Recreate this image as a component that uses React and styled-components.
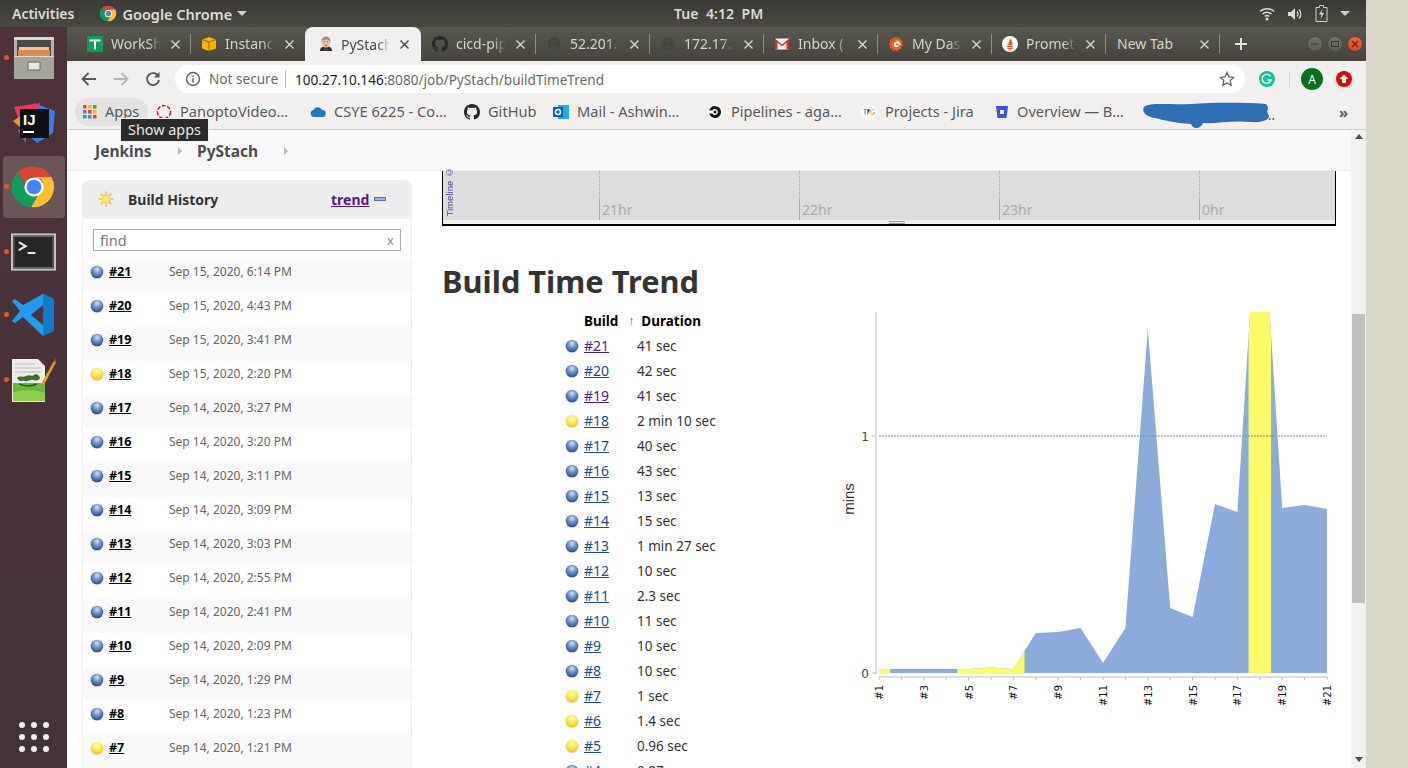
import React from "react"
import styled, { createGlobalStyle } from "styled-components"

const FONT = `"Noto Sans", "Open Sans", "Liberation Sans", sans-serif`

const GlobalStyle = createGlobalStyle`
  *{
    margin:0;
    padding:0;
    box-sizing:border-box;
  }
  html, body{
    width:1408px;
    height:768px;
    overflow:hidden;
    background:#d9d8cb;
    font-family:${FONT};
  }
`

const Desktop = styled.div`
  width:1408px;
  height:768px;
  overflow:hidden;
  position:relative;
  background:#d9d8cb;
`
const Screen = styled.div`
  width:1366px;
  height:768px;
  display:flex;
  flex-direction:column;
`
const TopBar = styled.div`
  height:27px;
  flex:none;
  display:flex;
  align-items:center;
  background:linear-gradient(#3a3935, #494840);
  color:#dcdcd6;
  font-size:14px;
  font-weight:600;
  padding-left:12px;
  position:relative;
`
const AppMenu = styled.div`
  display:flex;
  align-items:center;
  gap:5px;
  margin-left:26px;
  font-size:14.5px;
`
const Caret = styled.span`
  width:0;
  height:0;
  border-left:5px solid transparent;
  border-right:5px solid transparent;
  border-top:5px solid #cfcfc9;
  margin-left:${p => p.$left || 0}px;
`
const Clock = styled.div`
  position:absolute;
  left:674px;
  word-spacing:4px;
  white-space:nowrap;
`
const StatusIcons = styled.div`
  margin-left:auto;
  display:flex;
  align-items:center;
  gap:12px;
  padding-right:16px;
`
const Body = styled.div`
  flex:1;
  min-height:0;
  display:flex;
`
const Dock = styled.div`
  width:67px;
  flex:none;
  background:linear-gradient(#4d3339, #42323a);
  display:flex;
  flex-direction:column;
  align-items:center;
  position:relative;
`
const DockItem = styled.div`
  width:62px;
  height:${p => p.$h || 64}px;
  flex:none;
  display:flex;
  align-items:center;
  justify-content:center;
  border-radius:4px;
  background:${p => p.$active ? "#6c5558" : "transparent"};
  position:relative;
  &::before{
    content:"";
    display:${p => p.$idle ? "none" : "block"};
    position:absolute;
    left:1px;
    top:50%;
    margin-top:-3px;
    width:5px;
    height:5px;
    border-radius:50%;
    background:#e95420;
  }
`
const ShowApps = styled.div`
  margin-top:auto;
  margin-bottom:16px;
  display:grid;
  grid-template-columns:repeat(3, 6px);
  gap:6px;
`
const Dot = styled.span`
  width:6px;
  height:6px;
  border-radius:50%;
  background:#eee;
`
const Chrome = styled.div`
  flex:1;
  min-width:0;
  display:flex;
  flex-direction:column;
  position:relative;
`
const TabStrip = styled.div`
  height:34px;
  flex:none;
  display:flex;
  padding-left:9px;
  background:linear-gradient(#595850, #46443c);
  position:relative;
`
const Tab = styled.div`
  width:${p => p.$active ? 116 : 114}px;
  flex:none;
  height:${p => p.$active ? "34px" : "32px"};
  display:flex;
  align-items:center;
  padding:${p => p.$active ? "0 3px 0 13px" : "0 1px 0 11px"};
  font-size:14px;
  color:${p => p.$active ? "#4a4a4a" : "#d4d3cd"};
  background:${p => p.$active ? "#f1f0ef" : "transparent"};
  border-radius:${p => p.$active ? "8px 8px 0 0" : "0"};
  margin-top:${p => p.$active ? "0" : "1px"};
  margin-left:${p => p.$active ? "1px" : "0"};
  position:relative;
  &::after{
    content:"";
    display:${p => p.$divider ? "block" : "none"};
    position:absolute;
    right:-1px;
    top:6px;
    height:20px;
    width:1px;
    background:#8f8e85;
  }
`
const TabIcon = styled.span`
  width:16px;
  height:16px;
  flex:none;
  display:flex;
  align-items:center;
  justify-content:center;
`
const TabTitle = styled.span`
  flex:1;
  min-width:0;
  margin-left:${p => p.$blank ? 1 : p.$active ? 7 : 8}px;
  margin-top:${p => p.$active ? 0 : -2}px;
  white-space:nowrap;
  overflow:hidden;
  -webkit-mask-image:${p => p.$blank ? "none" : "linear-gradient(to right, #000 75%, transparent 100%)"};
  mask-image:${p => p.$blank ? "none" : "linear-gradient(to right, #000 75%, transparent 100%)"};
`
const TabClose = styled.span`
  width:28px;
  flex:none;
  text-align:center;
  line-height:1;
`
const NewTab = styled.div`
  width:44px;
  display:flex;
  align-items:center;
  justify-content:center;
`
const WindowButtons = styled.div`
  position:absolute;
  right:3px;
  top:9px;
  display:flex;
  gap:4px;
`
const WinBtn = styled.span`
  width:16px;
  height:16px;
  border-radius:50%;
  display:flex;
  align-items:center;
  justify-content:center;
  background:${p => p.$close ? "linear-gradient(#f0693a, #d9481c)" : "linear-gradient(#75746c, #5c5b53)"};
  border:1px solid #4b4a42;
`
const Toolbar = styled.div`
  height:34px;
  flex:none;
  display:flex;
  align-items:center;
  padding-top:2px;
  background:#f1f0ef;
`
const NavIcons = styled.div`
  width:108px;
  flex:none;
  display:flex;
  align-items:center;
  gap:14px;
  padding-left:13px;
`
const Omnibox = styled.div`
  width:1070px;
  height:28px;
  flex:none;
  background:#fff;
  border-radius:14px;
  display:flex;
  align-items:center;
  padding:0 10px 0 10px;
  font-size:13.6px;
  color:#6a6a6a;
`
const Secure = styled.span`
  margin-left:8px;
  padding-right:8px;
  border-right:1px solid #bbb;
  line-height:18px;
  width:77px;
  white-space:nowrap;
`
const Url = styled.span`
  margin-left:9px;
  color:#6a6a6a;
  b{
    font-weight:400;
    color:#222;
  }
`
const StarWrap = styled.span`
  margin-left:auto;
  display:flex;
`
const ToolbarRight = styled.div`
  display:flex;
  align-items:center;
  padding-left:14px;
`
const Sep = styled.span`
  width:1px;
  height:16px;
  background:#d5d5d5;
  margin:0 11px 0 14px;
`
const Avatar = styled.span`
  width:22px;
  height:22px;
  border-radius:50%;
  background:#0b6f1e;
  color:#fff;
  font-size:12px;
  display:flex;
  align-items:center;
  justify-content:center;
  margin-right:13px;
`
const BookmarkBar = styled.div`
  height:35px;
  flex:none;
  display:flex;
  align-items:center;
  background:#f1f0ef;
  border-bottom:1px solid #cfcfcf;
  padding-left:8px;
  position:relative;
  font-size:14.6px;
  color:#5a5a5a;
`
const Bookmark = styled.div`
  width:${p => p.$w}px;
  height:28px;
  flex:none;
  display:flex;
  align-items:center;
  gap:8px;
  padding-left:8px;
  white-space:nowrap;
  border-radius:14px;
  background:${p => p.$hover ? "#e3e2e1" : "transparent"};
`
const BookmarkText = styled.span`
  margin-top:-2px;
`
const Scribble = styled.div`
  width:135px;
  flex:none;
  margin-left:8px;
  height:22px;
  display:flex;
  align-items:flex-start;
`
const MoreMarks = styled.span`
  position:absolute;
  left:1272px;
  top:9px;
  font-size:15px;
  font-weight:700;
  line-height:16px;
  color:#555;
`
const Tooltip = styled.div`
  position:absolute;
  left:53px;
  top:91px;
  width:89px;
  height:24px;
  background:#2b2b2b;
  border:1px solid #eee;
  color:#e8e8e8;
  font-size:14.4px;
  line-height:22px;
  text-align:center;
  z-index:5;
`
const Page = styled.div`
  flex:1;
  min-height:0;
  display:flex;
  background:#fff;
`
const PageContent = styled.div`
  flex:1;
  min-width:0;
  display:flex;
  flex-direction:column;
  overflow:hidden;
`
const Scrollbar = styled.div`
  width:15px;
  flex:none;
  background:#f1f1f1;
  display:flex;
  flex-direction:column;
  align-items:center;
  padding-top:4px;
`
const ArrowUp = styled.span`
  width:0;
  height:0;
  border-left:4px solid transparent;
  border-right:4px solid transparent;
  border-bottom:5px solid #505050;
`
const ArrowDown = styled.span`
  width:0;
  height:0;
  margin-top:154px;
  border-left:4px solid transparent;
  border-right:4px solid transparent;
  border-top:5px solid #505050;
`
const Thumb = styled.div`
  width:13px;
  height:289px;
  background:#c1c1c1;
  margin-top:175px;
`
const Breadcrumbs = styled.div`
  height:41px;
  flex:none;
  display:flex;
  align-items:center;
  padding:1px 0 0 28px;
  background:#f8f8f8;
  border-bottom:1px solid #e9e9e9;
  font-size:15.5px;
  font-weight:700;
  color:#4a4d52;
`
const Crumb = styled.span`
  width:${p => p.$w}px;
  flex:none;
`
const CrumbArrow = styled.span`
  width:0;
  height:0;
  border-top:4px solid transparent;
  border-bottom:4px solid transparent;
  border-left:4px solid #b8b8b8;
  margin-right:${p => p.$right}px;
`
const Columns = styled.div`
  flex:1;
  min-height:0;
  display:flex;
`
const Side = styled.div`
  width:330px;
  flex:none;
  margin:9px 0 0 15px;
  border:1px solid #eee;
  border-bottom:none;
  border-radius:6px 6px 0 0;
  overflow:hidden;
`
const SideHead = styled.div`
  height:38px;
  display:flex;
  align-items:center;
  background:#eee;
  padding:0 0 2px 15px;
  font-size:14px;
  font-weight:700;
  color:#333;
`
const SideTitle = styled.span`
  margin-left:14px;
  width:203px;
`
const TrendLink = styled.a`
  color:#551a8b;
  text-decoration:underline;
`
const MinusIcon = styled.span`
  width:12px;
  height:4px;
  margin-left:5px;
  background:#9db7e0;
  border:1px solid #4f76b5;
`
const FindWrap = styled.div`
  padding:10px 10px 8px;
`
const FindBox = styled.div`
  height:22px;
  border:1px solid #aaa;
  display:flex;
  align-items:center;
  justify-content:space-between;
  padding:0 6px;
  font-size:14.5px;
  color:#777;
`
const FindClear = styled.span`
  font-size:13px;
  color:#888;
`
const HistoryRow = styled.div`
  height:34px;
  display:flex;
  align-items:flex-start;
  padding:4px 0 0 7px;
  background:${p => p.$odd ? "#f9f9f9" : "#fff"};
`
const BallWrap = styled.span`
  width:15px;
  height:18px;
  flex:none;
  display:flex;
  align-items:center;
`
const HistoryLink = styled.a`
  width:60px;
  flex:none;
  margin-left:4px;
  font-size:12.5px;
  font-weight:700;
  line-height:18px;
  color:#000;
  text-decoration:underline;
`
const HistoryDate = styled.span`
  font-size:12px;
  line-height:18px;
  color:#666;
  white-space:nowrap;
`
const Main = styled.div`
  flex:1;
  min-width:0;
  padding:0 15px 0 30px;
`
const Timeline = styled.div`
  width:894px;
  height:55px;
  border:solid #000;
  border-width:0 1px 2px 1px;
  background:#f0f0f0;
`
const TimelineBand = styled.div`
  height:49px;
  background:#ddd;
  display:flex;
`
const TimelineCopy = styled.div`
  width:156px;
  flex:none;
  display:flex;
  align-items:flex-end;
  padding:0 0 3px 2px;
`
const TimelineText = styled.span`
  writing-mode:vertical-rl;
  transform:rotate(180deg);
  font-family:"Liberation Sans", sans-serif;
  font-size:9.6px;
  line-height:10px;
  color:#4a4a94;
  white-space:nowrap;
`
const Hour = styled.div`
  width:${p => p.$w}px;
  flex:none;
  display:flex;
  flex-direction:column;
`
const HourDots = styled.div`
  height:28px;
  border-left:1px dotted #aaa;
`
const HourMark = styled.div`
  flex:1;
  border-left:1px solid #aaa;
  padding-left:2px;
  font-size:14px;
  line-height:21px;
  color:#aaa;
`
const Grip = styled.div`
  width:16px;
  height:3px;
  margin:1px 0 0 446px;
  border:solid #999;
  border-width:1px 0;
`
const Title = styled.h1`
  font-size:30.8px;
  font-weight:700;
  line-height:40px;
  color:#333;
  margin:35px 0 0 0;
`
const TrendRow = styled.div`
  display:flex;
  align-items:flex-start;
`
const Table = styled.div`
  width:398px;
  flex:none;
  padding:7px 0 0 123px;
  font-size:13.5px;
  color:#333;
`
const HeadRow = styled.div`
  height:25px;
  display:flex;
  align-items:center;
  padding-left:19px;
  font-weight:700;
  color:#000;
`
const SortArrow = styled.span`
  width:13px;
  margin-left:${p => p.$left}px;
  color:#a33;
  font-weight:400;
  font-size:12px;
  text-align:left;
`
const BuildRow = styled.div`
  height:25px;
  display:flex;
  align-items:center;
`
const BallCell = styled.span`
  width:19px;
  flex:none;
  display:flex;
`
const BuildLink = styled.a`
  width:53px;
  flex:none;
  font-size:14px;
  color:${p => p.$visited ? "#551a8b" : "#204a87"};
  text-decoration:underline;
`
const ChartWrap = styled.div`
  width:500px;
  flex:none;
  margin-top:-1px;
`

function Ball({ color, size = 14 }) {
  const id = color === "yellow" ? "ballY" : "ballB"
  return (
    <svg width={size} height={size} viewBox="0 0 14 14">
      <circle cx="7" cy="7.5" r="6.5" fill="#ddd" />
      <circle cx="7" cy="7" r="6.3" fill={`url(#${id})`} />
    </svg>
  )
}

function BallDefs() {
  return (
    <svg width="0" height="0" style={{ position: "absolute" }}>
      <defs>
        <radialGradient id="ballB" cx="50%" cy="30%" r="75%">
          <stop offset="0%" stopColor="#d4e0f2" />
          <stop offset="40%" stopColor="#7596cc" />
          <stop offset="100%" stopColor="#213f88" />
        </radialGradient>
        <radialGradient id="ballY" cx="50%" cy="30%" r="75%">
          <stop offset="0%" stopColor="#fffbc0" />
          <stop offset="50%" stopColor="#fde94a" />
          <stop offset="100%" stopColor="#f6b60c" />
        </radialGradient>
      </defs>
    </svg>
  )
}

function ChromeLogo({ size = 17 }) {
  return (
    <svg width={size} height={size} viewBox="0 0 48 48">
      <path d="M24 2a22 22 0 0 1 19 11H24a11 11 0 0 0-10 6.5L6 8A22 22 0 0 1 24 2z" fill="#db4437" />
      <path d="M6 8l9.5 16.5A11 11 0 0 0 27 34.6L21 45.8A22 22 0 0 1 6 8z" fill="#0f9d58" />
      <path d="M43 13a22 22 0 0 1-22 32.8L31.5 28A11 11 0 0 0 32 15.5L24 13z" fill="#fbc02d" />
      <circle cx="24" cy="24" r="10.5" fill="#fff" />
      <circle cx="24" cy="24" r="8" fill="#4285f4" />
    </svg>
  )
}

function Globe() {
  return (
    <svg width="16" height="16" viewBox="0 0 16 16">
      <circle cx="8" cy="8" r="7" fill="#45443f" stroke="#4f4e49" />
      <path d="M3 5h10M3 11h10M8 1v14" stroke="#4f4e49" />
    </svg>
  )
}

const tabIcons = {
  sheet: (
    <svg width="16" height="16" viewBox="0 0 16 16">
      <rect width="16" height="16" rx="1" fill="#0f9d58" />
      <path d="M2.5 4.5h11M8 4.5v9" stroke="#fff" strokeWidth="2" />
    </svg>
  ),
  aws: (
    <svg width="16" height="16" viewBox="0 0 16 16">
      <path d="M1 3.5L8 1l7 2.5v9L8 15l-7-2.5z" fill="#f7b500" />
      <path d="M1 3.5L8 6l7-2.5M8 6v9" stroke="#7a5a00" strokeWidth=".8" fill="none" />
    </svg>
  ),
  jenkins: (
    <svg width="18" height="18" viewBox="0 0 18 18">
      <path d="M2 17c0-3 2-4.5 3.5-5h7c1.5.5 3.5 2 3.5 5z" fill="#2f2f33" />
      <ellipse cx="9" cy="7" rx="5" ry="6" fill="#e9c3a8" />
      <path d="M4 7C3.5 2 7 .5 9 .5S14.5 2 14 7c-1-2-2-3-5-3S5 5 4 7z" fill="#9a8f86" />
      <path d="M7 14l2 1 2-1v2H7z" fill="#c8302c" />
      <path d="M6.5 6.5H8M10 6.5h1.5M7.5 10c1 .6 2 .6 3 0" stroke="#5b3a2a" strokeWidth=".8" />
    </svg>
  ),
  github: (
    <svg width="16" height="16" viewBox="0 0 16 16">
      <path fill="#26262b" d="M8 0C3.58 0 0 3.58 0 8c0 3.54 2.29 6.53 5.47 7.59.4.07.55-.17.55-.38 0-.19-.01-.82-.01-1.49-2.01.37-2.53-.49-2.69-.94-.09-.23-.48-.94-.82-1.13-.28-.15-.68-.52-.01-.53.63-.01 1.08.58 1.23.82.72 1.21 1.87.87 2.33.66.07-.52.28-.87.51-1.07-1.78-.2-3.64-.89-3.64-3.95 0-.87.31-1.59.82-2.15-.08-.2-.36-1.02.08-2.12 0 0 .67-.21 2.2.82.64-.18 1.32-.27 2-.27s1.36.09 2 .27c1.53-1.04 2.2-.82 2.2-.82.44 1.1.16 1.92.08 2.12.51.56.82 1.27.82 2.15 0 3.07-1.87 3.75-3.65 3.95.29.25.54.73.54 1.48 0 1.07-.01 1.93-.01 2.2 0 .21.15.46.55.38A8.01 8.01 0 0 0 16 8c0-4.42-3.58-8-8-8z" />
    </svg>
  ),
  gmail: (
    <svg width="16" height="16" viewBox="0 0 16 16">
      <rect x="1" y="2.5" width="14" height="11" fill="#f5f5f5" />
      <path d="M1 13.5v-11l7 6 7-6v11h-2.5V6.5L8 10.5 3.5 6.5v7z" fill="#d32f2f" />
    </svg>
  ),
  grafana: (
    <svg width="16" height="16" viewBox="0 0 16 16">
      <circle cx="8" cy="8" r="6" fill="#f7941d" />
      <path d="M8 .5l1.5 2 2.500-.8.5 2.500 2.500.8-1 2.300 1.500 2-2.300 1.200.2 2.500-2.500.1L9 15.500l-2-1.500-2.200 1.200-.7-2.400-2.600-.3.5-2.500L.5 8l1.800-1.800L1.800 3.700l2.500-.4L5 1l2 .9z" fill="#e8541e" />
      <circle cx="8.5" cy="8.5" r="4" fill="#fff" />
      <path d="M12 8.5a3.5 3.5 0 1 1-3.5-3.5M8 8.5h2.5" stroke="#e8541e" strokeWidth="1.5" fill="none" />
    </svg>
  ),
  prometheus: (
    <svg width="16" height="16" viewBox="0 0 16 16">
      <circle cx="8" cy="8" r="8" fill="#fff" />
      <path d="M8 2c.5 2 2.5 3 2.5 5.500 0 1-.4 1.500-.6 2H5.800c-.3-.6-.5-1.200-.3-2.200.1.500.5 1 1 1C6.200 6 8.200 5 8 2z" fill="#e6522c" />
      <path d="M5 10h6v1.200H5zM5.500 12h5v1H5.500zM6.500 13.500h3v1h-3z" fill="#e6522c" />
    </svg>
  ),
}

const tabs = [
  { title: "WorkSh", icon: tabIcons.sheet, divider: true },
  { title: "Instanc", icon: tabIcons.aws },
  { title: "PyStach", icon: tabIcons.jenkins, active: true },
  { title: "cicd-pip", icon: tabIcons.github, divider: true },
  { title: "52.201.", icon: <Globe />, divider: true },
  { title: "172.17.", icon: <Globe />, divider: true },
  { title: "Inbox (", icon: tabIcons.gmail, divider: true },
  { title: "My Das", icon: tabIcons.grafana, divider: true },
  { title: "Promet", icon: tabIcons.prometheus, divider: true },
  { title: "New Tab", divider: true, blank: true },
]

const bookmarks = [
  {
    w: 154, label: "PanoptoVideo…",
    icon: <svg width="16" height="16" viewBox="0 0 16 16"><circle cx="8" cy="8" r="6.5" fill="none" stroke="#d8212a" strokeWidth="1.6" strokeDasharray="4 1.5" /></svg>,
  },
  {
    w: 154, label: "CSYE 6225 - Co…",
    icon: <svg width="16" height="16" viewBox="0 0 16 16"><path d="M4 13a3.5 3.5 0 0 1-.6-6.9A4.5 4.5 0 0 1 11.8 6 3.5 3.5 0 0 1 12.5 13z" fill="#1d78c8" /></svg>,
  },
  { w: 89, label: "GitHub", icon: tabIcons.github },
  {
    w: 154, label: "Mail - Ashwin…",
    icon: (
      <svg width="16" height="16" viewBox="0 0 16 16">
        <rect x="5" y="1" width="11" height="14" fill="#28a8ea" />
        <rect x="0" y="3" width="10" height="10" fill="#0f5fb5" />
        <circle cx="5" cy="8" r="2.5" fill="none" stroke="#fff" strokeWidth="1.5" />
      </svg>
    ),
  },
  {
    w: 154, label: "Pipelines - aga…",
    icon: (
      <svg width="16" height="16" viewBox="0 0 16 16">
        <circle cx="8" cy="8" r="8" fill="#fff" />
        <path d="M8 2a6 6 0 1 1-5.8 7.5h3.100A3 3 0 1 0 5.300 6.500H2.200A6 6 0 0 1 8 2z" fill="#161616" />
        <circle cx="8" cy="8" r="1.5" fill="#161616" />
      </svg>
    ),
  },
  {
    w: 134, label: "Projects - Jira",
    icon: (
      <svg width="16" height="16" viewBox="0 0 16 16">
        <circle cx="8" cy="8" r="8" fill="#fff" />
        <path d="M2.5 5.5h3M4 5.5v5" stroke="#4a90d9" />
        <path d="M6.5 10.5v-5H9M6.5 8h2" stroke="#e56fa0" />
        <path d="M13.5 6a2.5 2.5 0 1 0 0 4V8.500H12" stroke="#e89a3c" fill="none" />
      </svg>
    ),
  },
  {
    w: 146, label: "Overview — B…",
    icon: <svg width="14" height="16" viewBox="0 0 14 16"><path d="M1 2h12l-1.500 12h-9z" fill="#3d4ff0" /><rect x="5" y="6" width="4" height="4" fill="#fff" /></svg>,
  },
]

const history = [
  ["#21", "Sep 15, 2020, 6:14 PM", "blue"],
  ["#20", "Sep 15, 2020, 4:43 PM", "blue"],
  ["#19", "Sep 15, 2020, 3:41 PM", "blue"],
  ["#18", "Sep 15, 2020, 2:20 PM", "yellow"],
  ["#17", "Sep 14, 2020, 3:27 PM", "blue"],
  ["#16", "Sep 14, 2020, 3:20 PM", "blue"],
  ["#15", "Sep 14, 2020, 3:11 PM", "blue"],
  ["#14", "Sep 14, 2020, 3:09 PM", "blue"],
  ["#13", "Sep 14, 2020, 3:03 PM", "blue"],
  ["#12", "Sep 14, 2020, 2:55 PM", "blue"],
  ["#11", "Sep 14, 2020, 2:41 PM", "blue"],
  ["#10", "Sep 14, 2020, 2:09 PM", "blue"],
  ["#9", "Sep 14, 2020, 1:29 PM", "blue"],
  ["#8", "Sep 14, 2020, 1:23 PM", "blue"],
  ["#7", "Sep 14, 2020, 1:21 PM", "yellow"],
]

const durations = [
  ["#21", "41 sec", "blue", true],
  ["#20", "42 sec", "blue"],
  ["#19", "41 sec", "blue", true],
  ["#18", "2 min 10 sec", "yellow"],
  ["#17", "40 sec", "blue"],
  ["#16", "43 sec", "blue"],
  ["#15", "13 sec", "blue"],
  ["#14", "15 sec", "blue"],
  ["#13", "1 min 27 sec", "blue"],
  ["#12", "10 sec", "blue"],
  ["#11", "2.3 sec", "blue"],
  ["#10", "11 sec", "blue"],
  ["#9", "10 sec", "blue"],
  ["#8", "10 sec", "blue"],
  ["#7", "1 sec", "yellow"],
  ["#6", "1.4 sec", "yellow"],
  ["#5", "0.96 sec", "yellow"],
  ["#4", "0.87 sec", "blue"],
]

// top of the area at each build, in page pixels minus the chart's 840/300 origin
const CHART_X0 = 39
const CHART_STEP = 22.4
const CHART_BASE = 373
const tops = [369, 369, 369, 369, 369, 367.5, 369, 333, 332, 328, 363, 328, 29, 308, 317, 204, 212, -141, 208, 205, 209]
const px = i => CHART_X0 + i * CHART_STEP

function areaPoints(from, to) {
  const lerp = pos => {
    const i = Math.floor(pos)
    const t = pos - i
    const a = tops[Math.max(i, 0)]
    const b = tops[Math.min(i + 1, tops.length - 1)]
    return a + (b - a) * t
  }
  const pts = []
  pts.push([px(from), CHART_BASE])
  pts.push([px(from), lerp(from)])
  for (let i = Math.ceil(from); i <= to; i++) pts.push([px(i), tops[i]])
  pts.push([px(to), lerp(to)])
  pts.push([px(to), CHART_BASE])
  return pts.map(p => p.join(",")).join(" ")
}

function TrendChart() {
  const ticks = tops.map((_, i) => i)
  return (
    <svg width="500" height="420" viewBox="0 0 500 420">
      <defs>
        <clipPath id="plot"><rect x="36" y="12" width="460" height="362" /></clipPath>
      </defs>
      <line x1="36" y1="12" x2="36" y2="374" stroke="#bbb" />
      <g clipPath="url(#plot)">
        <polygon points={areaPoints(0, 20)} fill="#8cabda" />
        <polygon points={areaPoints(0, 0.5)} fill="#fbfb67" />
        <polygon points={areaPoints(3.5, 6.5)} fill="#fbfb67" />
        <polygon points={areaPoints(16.5, 17.5)} fill="#fbfb67" />
      </g>
      <line x1="39" y1="136" x2="487" y2="136" stroke="#888" strokeDasharray="2 1" />
      <line x1="32" y1="136" x2="36" y2="136" stroke="#bbb" />
      <line x1="32" y1="373" x2="36" y2="373" stroke="#bbb" />
      <line x1="39" y1="377" x2="488" y2="377" stroke="#bbb" />
      {ticks.map(i => <line key={i} x1={px(i)} y1="377" x2={px(i)} y2="380" stroke="#bbb" />)}
      <text x="25" y="141" fontFamily="DejaVu Sans, sans-serif" fontSize="12" fill="#444" textAnchor="middle">1</text>
      <text x="25" y="378" fontFamily="DejaVu Sans, sans-serif" fontSize="12" fill="#444" textAnchor="middle">0</text>
      <text transform="translate(14 199) rotate(-90)" fontFamily="Liberation Sans, sans-serif" fontSize="15" fill="#333" textAnchor="middle">mins</text>
      {ticks.filter(i => i % 2 === 0).map(i => (
        <text key={i} transform={`translate(${px(i) + 4} 385) rotate(-90)`} fontFamily="DejaVu Sans, sans-serif" fontSize="10" fill="#111" textAnchor="end">{`#${i + 1}`}</text>
      ))}
    </svg>
  )
}

export default class App extends React.Component{
  render(){
    return(
      <Desktop>
        <GlobalStyle/>
        <BallDefs/>
        <Screen>
          <TopBar>
            <span>Activities</span>
            <AppMenu>
              <ChromeLogo/>
              <span>Google Chrome</span>
              <Caret/>
            </AppMenu>
            <Clock>Tue 4:12 PM</Clock>
            <StatusIcons>
              <svg width="16" height="14" viewBox="0 0 16 14"><path d="M1 4.5a10 10 0 0 1 14 0M3.5 7a6.5 6.5 0 0 1 9 0M5.8 9.5a3 3 0 0 1 4.4 0" stroke="#dcdcd6" strokeWidth="1.5" fill="none" /><circle cx="8" cy="12" r="1.6" fill="#dcdcd6" /></svg>
              <svg width="16" height="14" viewBox="0 0 16 14"><path d="M1 5h3l4-4v12l-4-4H1z" fill="#dcdcd6" /><path d="M10 4.5a3.5 3.5 0 0 1 0 5M12 2.5a6.5 6.5 0 0 1 0 9" stroke="#dcdcd6" strokeWidth="1.3" fill="none" /></svg>
              <svg width="13" height="17" viewBox="0 0 13 17"><path d="M4.5.5h4v2H12v14H1v-14h3.500z" fill="none" stroke="#cfcfc9" /><path d="M7.5 4L4 9.5h2.5L5.5 14 9 8H6.500z" fill="#dcdcd6" /></svg>
              <Caret/>
            </StatusIcons>
          </TopBar>
          <Body>
            <Dock>
              <DockItem $h={62}>
                <svg width="42" height="44" viewBox="0 0 42 44">
                  <rect x="1" y="1" width="40" height="42" rx="2" fill="#b3b2ab" />
                  <rect x="1" y="1" width="40" height="3" rx="1" fill="#d8d8d4" />
                  <rect x="4" y="4" width="34" height="16" fill="#4b4944" />
                  <rect x="6" y="11" width="30" height="3" fill="#f2c79a" />
                  <rect x="5" y="14" width="32" height="6" fill="#e08a45" />
                  <rect x="1" y="20" width="40" height="23" rx="1" fill="#a5a49d" />
                  <rect x="1" y="20" width="40" height="1" fill="#d8d8d4" />
                  <rect x="15" y="26" width="12" height="8" rx="1" fill="#e8e8e4" stroke="#66655f" />
                </svg>
              </DockItem>
              <DockItem $h={67} $idle>
                <svg width="44" height="46" viewBox="0 0 44 44">
                  <path d="M22 2L43 10l-2 22-16 10L8 26z" fill="#3a7de8" />
                  <path d="M2 6l26-4-6 16-12 10z" fill="#f2316c" />
                  <path d="M1 20l9-6v14z" fill="#f6952a" />
                  <path d="M6 30l8-8v20z" fill="#9a4dbb" />
                  <rect x="8" y="8" width="29" height="29" fill="#111" />
                  <text x="11" y="24" fontFamily="Liberation Sans, sans-serif" fontSize="15" fontWeight="700" fill="#fff">IJ</text>
                  <rect x="11" y="30" width="11" height="2" fill="#fff" />
                </svg>
              </DockItem>
              <DockItem $active $h={62}><ChromeLogo size={44}/></DockItem>
              <DockItem $h={68}>
                <svg width="45" height="38" viewBox="0 0 46 38">
                  <rect x="1" y="1" width="44" height="36" fill="#2d2d2b" stroke="#c4c4c0" strokeWidth="2" />
                  <rect x="3" y="3" width="40" height="32" fill="#262626" stroke="#777" />
                  <path d="M8 9l7 4-7 4" stroke="#eee" strokeWidth="2" fill="none" />
                  <rect x="17" y="19" width="8" height="2" fill="#eee" />
                </svg>
              </DockItem>
              <DockItem $h={58}>
                <svg width="44" height="44" viewBox="0 0 44 44">
                  <path d="M31 1l11 5v32l-11 5-20-19-8 6-3-2 8-10-8-10 3-2 8 6z" fill="#1f9cf0" />
                  <path d="M31 1v42l11-5V6z" fill="#0e7cc9" />
                  <path d="M31 12L19 22l12 10z" fill="#4d3339" />
                </svg>
              </DockItem>
              <DockItem $h={72}>
                <svg width="46" height="46" viewBox="0 0 46 46">
                  <path d="M1 2h26l7 7v36H1z" fill="#ecece8" />
                  <path d="M4 7h20M4 11h26M4 15h26" stroke="#bbb" />
                  <rect x="2" y="26" width="32" height="18" fill="#68b83e" />
                  <path d="M2 36c8-4 22-4 32 0v8H2z" fill="#8ccf4c" />
                  <path d="M6 21c3-3 6 0 9-2s6 1 8-1 6 1 6 3-4 3-7 2-5 2-8 1-5 2-8-3z" fill="#3f6f2f" />
                  <path d="M8 27c4 2 12 3 18 0" stroke="#2d5a25" strokeWidth="1.5" fill="none" />
                  <path d="M30 27L43 4l2 1-12 23z" fill="#e2a21c" />
                  <path d="M43 4l1-3 1.5 1-.5 3z" fill="#a33" />
                </svg>
              </DockItem>
              <ShowApps>
                {[...Array(9)].map((_, i) => <Dot key={i}/>)}
              </ShowApps>
            </Dock>
            <Chrome>
              <TabStrip>
                {tabs.map(t => (
                  <Tab key={t.title} $active={t.active} $divider={t.divider}>
                    {!t.blank && <TabIcon>{t.icon}</TabIcon>}
                    <TabTitle $active={t.active} $blank={t.blank}>{t.title}</TabTitle>
                    <TabClose>
                      <svg width="9" height="9" viewBox="0 0 9 9"><path d="M.5.5l8 8M8.5.5l-8 8" stroke={t.active ? "#444" : "#d8d7d1"} strokeWidth="1.4" /></svg>
                    </TabClose>
                  </Tab>
                ))}
                <NewTab>
                  <svg width="14" height="14" viewBox="0 0 14 14"><path d="M7 1v12M1 7h12" stroke="#e4e3de" strokeWidth="2" /></svg>
                </NewTab>
                <WindowButtons>
                  <WinBtn><svg width="8" height="8" viewBox="0 0 8 8"><path d="M0 4h8" stroke="#3a3a35" /></svg></WinBtn>
                  <WinBtn><svg width="8" height="8" viewBox="0 0 8 8"><rect x=".5" y="1.5" width="7" height="5" fill="none" stroke="#3a3a35" /></svg></WinBtn>
                  <WinBtn $close><svg width="8" height="8" viewBox="0 0 8 8"><path d="M1 1l6 6M7 1L1 7" stroke="#5a2410" strokeWidth="1.2" /></svg></WinBtn>
                </WindowButtons>
              </TabStrip>
              <Toolbar>
                <NavIcons>
                  <svg width="18" height="16" viewBox="0 0 18 16"><path d="M16 8H3M8.5 2l-6 6 6 6" stroke="#555" strokeWidth="1.8" fill="none" /></svg>
                  <svg width="18" height="16" viewBox="0 0 18 16"><path d="M2 8h13M9.5 2l6 6-6 6" stroke="#b4b4b4" strokeWidth="1.8" fill="none" /></svg>
                  <svg width="16" height="16" viewBox="0 0 16 16" style={{ marginLeft: 1 }}><path d="M13.5 5.5A6 6 0 1 0 14 9" stroke="#555" strokeWidth="1.8" fill="none" /><path d="M14.5 1v5.500H9z" fill="#555" /></svg>
                </NavIcons>
                <Omnibox>
                  <svg width="16" height="16" viewBox="0 0 16 16"><circle cx="8" cy="8" r="6.5" fill="none" stroke="#5f6368" strokeWidth="1.4" /><path d="M8 7v4.5M8 4.5v1.4" stroke="#5f6368" strokeWidth="1.5" /></svg>
                  <Secure>Not secure</Secure>
                  <Url><b>100.27.10.146</b>:8080/job/PyStach/buildTimeTrend</Url>
                  <StarWrap>
                    <svg width="16" height="16" viewBox="0 0 16 16"><path d="M8 1.5l2 4.400 4.700.5-3.500 3.200 1 4.700L8 11.900l-4.200 2.400 1-4.700L1.300 6.400 6 5.900z" fill="none" stroke="#5f6368" strokeWidth="1.3" /></svg>
                  </StarWrap>
                </Omnibox>
                <ToolbarRight>
                  <svg width="16" height="16" viewBox="0 0 16 16"><circle cx="8" cy="8" r="8" fill="#15c39a" /><path d="M11.5 5.5a4.5 4.5 0 1 0 .5 3.500H8.500" stroke="#fff" strokeWidth="1.4" fill="none" /></svg>
                  <Sep/>
                  <Avatar>A</Avatar>
                  <svg width="16" height="16" viewBox="0 0 16 16"><circle cx="8" cy="8" r="8" fill="#e60000" /><path d="M8 3.500l4.500 4.500H10v4H6V8H3.500z" fill="#fff" /></svg>
                </ToolbarRight>
              </Toolbar>
              <BookmarkBar>
                <Bookmark $w={73} $hover>
                  <svg width="14" height="14" viewBox="0 0 14 14">
                    {["#ea4335", "#fbbc04", "#34a853", "#4285f4", "#ea4335", "#fbbc04", "#34a853", "#4285f4", "#ea4335"].map((c, i) => (
                      <rect key={i} x={(i % 3) * 5} y={Math.floor(i / 3) * 5} width="3.5" height="3.5" fill={c} />
                    ))}
                  </svg>
                  <BookmarkText>Apps</BookmarkText>
                </Bookmark>
                {bookmarks.map(b => (
                  <Bookmark key={b.label} $w={b.w}>{b.icon}<BookmarkText>{b.label}</BookmarkText></Bookmark>
                ))}
                <Scribble>
                  <svg width="135" height="30" viewBox="0 0 135 30">
                    <path d="M3 6C8 1 30 4 50 3S95 1 125 3C129 7 125 10 127 13C131 18 122 22 110 21C90 19 75 23 62 22C60 28 52 29 50 23C35 22 22 19 14 17C6 16 0 11 3 6Z" fill="#2f6db5" />
                    <text x="123" y="19" fontFamily="Noto Sans, sans-serif" fontSize="14" fill="#5a5a5a">…</text>
                  </svg>
                </Scribble>
                <MoreMarks>»</MoreMarks>
              </BookmarkBar>
              <Tooltip>Show apps</Tooltip>
              <Page>
                <PageContent>
                  <Breadcrumbs>
                    <Crumb $w={83}>Jenkins</Crumb>
                    <CrumbArrow $right={15}/>
                    <Crumb $w={87}>PyStach</Crumb>
                    <CrumbArrow $right={0}/>
                  </Breadcrumbs>
                  <Columns>
                    <Side>
                      <SideHead>
                        <svg width="16" height="16" viewBox="0 0 16 16">
                          <g stroke="#f7b733" strokeWidth="1.5">
                            <path d="M8 .5v3M8 12.500v3M.5 8h3M12.500 8h3M2.700 2.700l2.100 2.100M11.200 11.200l2.100 2.100M13.300 2.700l-2.100 2.100M4.800 11.200l-2.100 2.100" />
                          </g>
                          <circle cx="8" cy="8" r="4" fill="#fdee73" stroke="#f7c948" />
                        </svg>
                        <SideTitle>Build History</SideTitle>
                        <TrendLink>trend</TrendLink>
                        <MinusIcon/>
                      </SideHead>
                      <FindWrap>
                        <FindBox>
                          <span>find</span>
                          <FindClear>x</FindClear>
                        </FindBox>
                      </FindWrap>
                      {history.map((h, i) => (
                        <HistoryRow key={h[0]} $odd={i % 2 === 0}>
                          <BallWrap><Ball color={h[2]}/></BallWrap>
                          <HistoryLink>{h[0]}</HistoryLink>
                          <HistoryDate>{h[1]}</HistoryDate>
                        </HistoryRow>
                      ))}
                    </Side>
                    <Main>
                      <Timeline>
                        <TimelineBand>
                          <TimelineCopy><TimelineText>Timeline ©</TimelineText></TimelineCopy>
                          {["21hr", "22hr", "23hr", "0hr"].map(h => (
                            <Hour key={h} $w={h === "0hr" ? 136 : 200}>
                              <HourDots/>
                              <HourMark>{h}</HourMark>
                            </Hour>
                          ))}
                        </TimelineBand>
                        <Grip/>
                      </Timeline>
                      <Title>Build Time Trend</Title>
                      <TrendRow>
                        <Table>
                          <HeadRow>
                            Build
                            <SortArrow $left={10}>↑</SortArrow>
                            Duration
                          </HeadRow>
                          {durations.map(d => (
                            <BuildRow key={d[0]}>
                              <BallCell><Ball color={d[2]}/></BallCell>
                              <BuildLink $visited={d[3]}>{d[0]}</BuildLink>
                              <span>{d[1]}</span>
                            </BuildRow>
                          ))}
                        </Table>
                        <ChartWrap><TrendChart/></ChartWrap>
                      </TrendRow>
                    </Main>
                  </Columns>
                </PageContent>
                <Scrollbar>
                  <ArrowUp/>
                  <Thumb/>
                  <ArrowDown/>
                </Scrollbar>
              </Page>
            </Chrome>
          </Body>
        </Screen>
      </Desktop>
    )
  }
}
